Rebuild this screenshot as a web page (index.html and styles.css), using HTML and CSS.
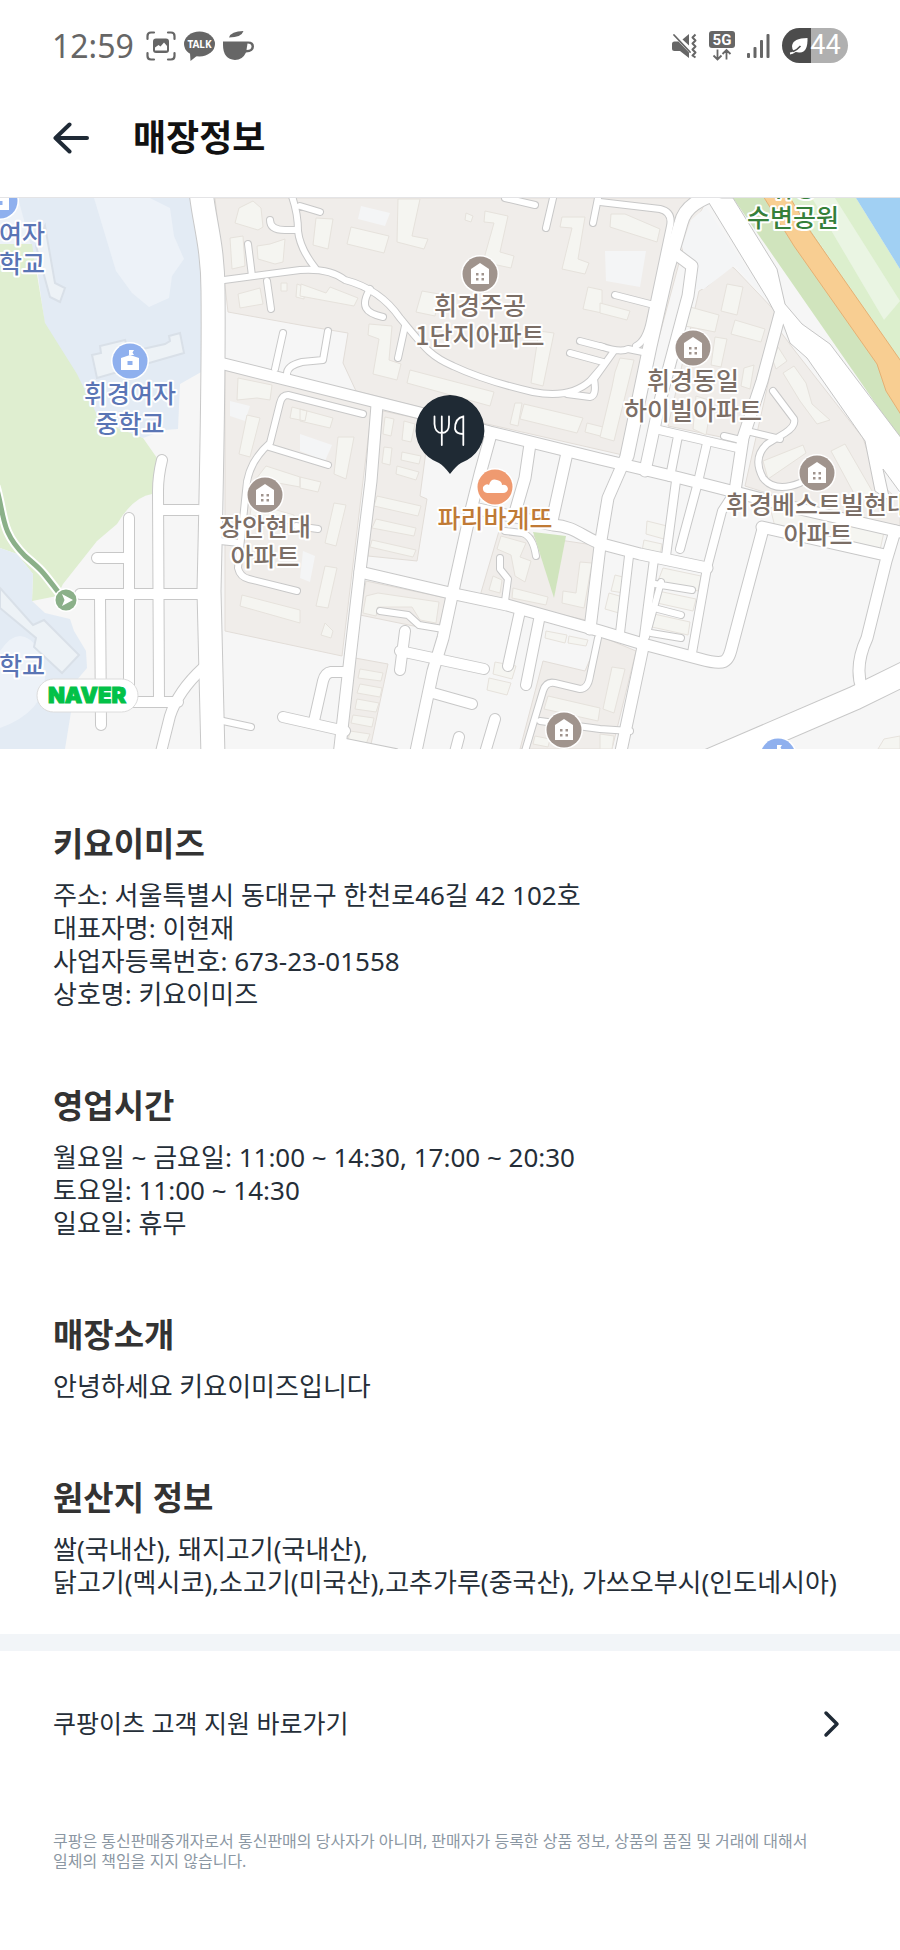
FILE: index.html
```
<!DOCTYPE html>
<html lang="ko">
<head>
  <meta charset="UTF-8">
  <meta name="viewport" content="width=device-width, initial-scale=1.0">
  <title>매장정보</title>
  <link rel="stylesheet" href="styles.css">
</head>
<body>
  <div class="status">
    <div class="status-left">
      <span class="time">12:59</span>
      <svg width="30" height="30" viewBox="0 0 30 30" aria-hidden="true">
        <path d="M1.5 8V5Q1.5 1.500 5 1.500H8M22 1.500H25Q28.500 1.500 28.500 5V8M28.500 22V25Q28.500 28.500 25 28.500H22M8 28.500H5Q1.500 28.500 1.500 25V22" fill="none" stroke="#666" stroke-width="2.200" stroke-linecap="round"/>
        <rect x="7" y="7.500" width="16" height="14.500" rx="3" fill="#666"/>
        <path d="M9 19.500V16.500L12.500 14L14.500 15.500L18 11.500L21 15V19.500Z" fill="#fff"/>
      </svg>
      <svg width="31" height="30" viewBox="0 0 31 30" aria-hidden="true">
        <ellipse cx="15.500" cy="13" rx="15.500" ry="12.500" fill="#666"/>
        <path d="M6 22L6.500 30L14 24Z" fill="#666"/>
        <text x="15.500" y="17" class="talk">TALK</text>
      </svg>
      <svg width="31" height="30" viewBox="0 0 31 30" aria-hidden="true">
        <path d="M0 10.500H24Q31 10 31 15.500Q31 21 23 21.500Q19.500 29 12 29Q0 28 0 14Z" fill="#666"/>
        <path d="M24.500 12.500Q28.500 12.500 28.500 15.500Q28.500 19 23.500 19Z" fill="#fff"/>
        <path d="M6 6.500Q8 0 20.500 0Q18.500 6.500 6 6.500Z" fill="#666"/>
      </svg>
    </div>
    <div class="status-right">
      <svg width="25" height="26" viewBox="0 0 25 26" fill="#666" aria-hidden="true">
        <path d="M0 11Q0 8.500 2.500 8.500H6.500L17 19.500V25L8 18H2.500Q0 18 0 15.500Z"/>
        <path d="M10.500 6.500L17 1V12.500Z"/>
        <path d="M2 2L18 19" stroke="#666" stroke-width="1.800" stroke-linecap="round"/>
        <path d="M23.500 1.500L20.500 4.500L23.500 7.500L20.500 10.500L23.500 13.500L20.500 16.500L23.500 19.500L20.500 22.500L23.500 24.500" fill="none" stroke="#666" stroke-width="2" stroke-linejoin="round"/>
      </svg>
      <svg width="26" height="30" viewBox="0 0 26 30" aria-hidden="true">
        <rect width="26" height="17" rx="3" fill="#666"/>
        <text x="13" y="14" class="five-g">5G</text>
        <path d="M8.500 18.500V28M4.500 24.500L8.500 28.500L12.500 24.500M17.500 28.500V19.500M13.500 23L17.500 19L21.500 23" fill="none" stroke="#666" stroke-width="1.800"/>
      </svg>
      <svg width="23" height="26" viewBox="0 0 23 26" fill="#666" aria-hidden="true">
        <rect x="0" y="20" width="3" height="5" rx="1"/>
        <rect x="6.500" y="14" width="3" height="11" rx="1"/>
        <rect x="13" y="7" width="3" height="18" rx="1"/>
        <rect x="19.500" y="1" width="3" height="24" rx="1"/>
      </svg>
      <div class="battery">
        <svg width="20" height="18" viewBox="0 0 20 18" aria-hidden="true">
          <path d="M18.500 1Q19 15 11 15.500Q3 16 3 9Q4 1 18.500 1Z" fill="#fff"/>
          <path d="M1 16.500Q6 16 11 9" fill="none" stroke="#fff" stroke-width="2"/>
          <path d="M4 14.500Q8 13 11.500 9" fill="none" stroke="#4c4c4c" stroke-width="1.500"/>
        </svg>
        <span>44</span>
      </div>
    </div>
  </div>

  <header class="header">
    <button class="back" type="button" aria-label="뒤로">
      <svg width="36" height="32" viewBox="0 0 36 32" aria-hidden="true">
        <path d="M34 16H3M16.500 2.500L2.500 16L16.500 29.500" fill="none" stroke="#1f2a36" stroke-width="4" stroke-linecap="round" stroke-linejoin="round"/>
      </svg>
    </button>
    <h1>매장정보</h1>
  </header>

  <svg class="map" viewBox="0 197 900 551" role="img" aria-label="매장 위치 지도">
    <defs>
      <g id="roads">
        <path class="w24" d="M201 190C204 220 213 245 213 290C214 380 211 500 209 590L213 755"/>
        <path class="w24" d="M690 768L855 697L910 670"/>
        <path class="w12" d="M220 362L300 382L420 412L490 431L600 458L680 477L735 491L800 508L905 532"/>
        <path class="w12" d="M377 404L371 480L360 570L350 657L339 755"/>
        <path class="w12" d="M360 571L450 592L507 604L600 630L643 643L700 658C725 665 728 662 732 645L743 603L763 528"/>
        <path class="w12" d="M491 433L480 473L470 513L453 590L443 637L433 670L415 755"/>
        <path class="w12" d="M530 443L525 477L514 515M567 452L563 470L552 520"/>
        <path class="w12" d="M478 508L553 524C575 525 585 538 602 543L640 553L707 567"/>
        <path class="w14" d="M722 190C700 198 685 205 681 222L667 270L650 345L627 455"/>
        <path class="w12" d="M625 458L608 497L600 545L590 628"/>
        <path class="w12" d="M676 253L692 265L688 295L660 400L645 470"/>
        <path class="w9" d="M676 480L666 555M697 485L680 548M629 555L620 632M654 558L643 643M735 490L722 510L707 567L692 652"/>
        <path class="w12" d="M780 313L762 380L743 437L735 490"/>
        <path class="w9" d="M655 428L742 448M678 435L670 476M707 442L698 481"/>
        <path class="w12" d="M762 526L885 554M895 530L886 560L867 637Q854 665 862 688M643 646L620 755"/>
        <path class="w11" d="M162 459Q158 475 158 490L159 700M160 509H198M129 517V700M97 557H127M80 593H202M100 595L101 724M133 701H178M203 667Q178 690 170 715L160 755"/>
        <path class="w11" d="M400 650L484 668M405 630L400 669M433 692L472 703M520 610L508 665M540 614L526 684M495 718L484 755M459 736L454 755M347 671H331Q325 672 323 680L314 720M283 716L345 730M345 743L395 753"/>
        <path class="w7" d="M224 279L300 269Q330 267 345 279Q380 288 400 317C425 347 430 355 453 365Q485 380 533 391Q570 398 590 380L602 366M567 393L590 396Q597 395 594 378L614 350M600 345Q620 352 628 348L648 352M650 303L615 294M636 345Q646 340 650 320L670 225Q673 211 660 208L600 201"/>
        <path class="w7" d="M290 190Q298 210 298 230Q300 248 316 268M270 219Q270 229 285 229H298M248 243L252 275M267 280L271 308M283 332L275 368M328 330L323 359L302 361Q286 365 287 374M405 325L398 357M370 288C360 305 365 312 383 316M505 197L535 204M553 197L546 227M598 197L593 222M580 340L603 346M570 352L603 361M300 205L320 211"/>
        <path class="w7" d="M363 413L288 394Q282 394 280 402L270 442Q247 462 246 490L238 567Q240 576 249 578L297 590M269 446L328 464M223 720L251 726M220 540L240 542M296 525L318 528"/>
        <path class="w7" d="M773 390L794 418Q796 425 785 432L767 443Q752 457 763 477Q775 492 800 482M747 430L780 438M724 435L745 440"/>
        <path class="w7" d="M380 610L408 614L419 624L443 628M500 557V568L508 578L505 600M505 530L522 532Q533 535 536 555M525 750L543 690Q546 680 555 682L580 688Q588 688 590 675L598 637M540 720L600 728L630 730M655 583L692 589M661 581L646 636M654 607L681 614M651 632L681 637"/>
      </g>
      <g id="home">
        <circle r="19" fill="#fff"/>
        <circle r="17.500" fill="#a0948d"/>
        <path d="M0 -11L9 -5V10H-9V-5Z" fill="#fff"/>
        <path d="M-4 -1H-1.500V1.500H-4ZM1.500 -1H4V1.500H1.500ZM-4 4H-1.500V6.500H-4ZM1.500 4H4V6.500H1.500Z" fill="#a0948d"/>
      </g>
      <g id="school">
        <circle r="19" fill="#fff"/>
        <circle r="17.500" fill="#8fb0ee"/>
        <path d="M-9 -3L0 -6L9 -3V9H-9ZM-1 -11H4L2.500 -8.500L4 -6H-1Z" fill="#fff"/>
        <rect x="-2.500" y="0" width="5" height="4" fill="#8fb0ee"/>
      </g>
    </defs>

    <rect y="197" width="900" height="551" fill="#f6f6f6"/>

    <!-- schools and parks -->
    <path fill="#edf2f8" d="M0 197H30V260H0Z"/>
    <path fill="#e3ebf4" d="M18 197H190L203 280V370L180 383L178 428L165 429L143 437L100 420L45 325L37 267Z"/>
    <path fill="#dfeed0" d="M0 243H32L45 322L77 373L100 420L143 437L157 457L152 493Q133 496 117 523L97 540L63 583L57 595L32 600L33 573L17 553L0 547Z"/>
    <path fill="#e3ebf4" d="M0 547L17 553L33 573L32 600L45 612L70 618L74 630L86 650L87 667L76 680L65 748H0Z"/>
    <path fill="#edf2f8" d="M94 197H150L170 207L174 235L184 258L172 275L169 297L149 306L132 292L116 270ZM0 650Q20 620 40 650Q60 705 0 727Z"/>
    <g class="school-bldg">
      <path d="M45 225L55 282L65 287L60 301L50 296L36 245Z"/>
      <path d="M92 354L101 352L100 345L125 339L129 351L165 343L170 340L169 335L180 332L184 352L97 377Z"/>
      <path d="M0 587L33 624L44 619L79 654L62 672L34 646L36 637L0 607Z"/>
    </g>
    <path fill="#d0e4bd" d="M733 197H790L900 365V438L860 380Z"/>
    <path fill="#dcefcd" d="M790 197H856L900 268V365Z"/>
    <path fill="#eaf5e3" d="M812 197H835L900 300L884 319Z"/>
    <path fill="#a1d0f3" d="M856 197H900V268Z"/>
    <path fill="#f8ce92" stroke="#e5b074" d="M760 190L794 245L877 363L886 390L905 420V366L810 230L786 190Z"/>

    <!-- apartment complexes -->
    <g class="block">
      <path d="M215 197H708L685 240L627 455L487 423L356 390L343 362L348 332L300 324L228 311Z"/>
      <path d="M225 369L372 405L342 655L225 630Z"/>
      <path d="M383 410L430 420L420 495L427 498L417 560L368 555Z"/>
      <path d="M499 530L600 545L590 620L480 595Z"/>
      <path d="M366 580L446 597L438 630L360 614Z"/>
      <path d="M355 657L388 663L370 748H345Z"/>
      <path d="M543 660L585 670L600 635L636 650L612 748H520Z"/>
      <path d="M699 290L708 285L730 264L735 268L775 310L740 440L668 425Z"/>
      <path d="M780 330L795 350L863 437L877 480L900 500V535L745 485Z"/>
    </g>
    <path fill="#f4f5f6" d="M682 245L691 219L706 206L768 300L735 264L704 288L694 288ZM361 205L390 212L385 225L358 218ZM605 250L646 250L640 286L606 280ZM300 433L332 444L325 460L300 450ZM303 550L315 555L310 581L300 577ZM230 400L250 405L245 420L230 415Z"/>
    <g class="bldg">
      <path d="M239 207L253 200L261 207L263 226L258 229L235 222ZM257 245L270 243L285 238L283 261L275 263L258 258ZM230 237L243 235L245 265L232 268ZM238 293L260 287L263 303L240 307ZM281 282L287 282V290H281ZM297 283L305 286L304 298L296 296Z"/>
      <path d="M316 217L333 218L328 248L313 244ZM351 226L389 235L384 252L347 243ZM398 198H420L412 235L428 238L424 248L397 241ZM485 210L508 215L500 251L514 255L511 267L483 261L494 222L484 221ZM562 216L585 216L578 258L589 262L585 273L562 268L572 227L560 226ZM466 212L473 215L471 221L465 219Z"/>
      <path d="M301 283L326 292L330 286L358 297L354 305L300 295ZM422 290L439 293L435 315L416 311ZM369 323L392 325L389 359L401 363L397 379L373 373L379 338L368 334ZM410 369L494 391L490 405L407 382ZM539 330L554 332L543 385L531 382ZM588 286L602 289V312L583 308ZM515 402L522 402L518 425L510 423ZM524 403L583 417L577 432L520 418ZM587 422L607 427L604 436L585 431Z"/>
      <path d="M611 213L625 213L660 228L657 241L610 226ZM600 302L630 310L627 319L600 312ZM620 357L634 359L614 440L600 436L612 386L615 371Z"/>
      <path d="M238 377L272 384L270 399L257 397L237 399ZM247 414L260 417L250 456L239 453ZM292 406L307 410L305 420L290 417ZM300 408L333 417L330 427L300 420ZM338 436L354 436L346 478L334 473ZM300 476L321 481L318 491L300 487ZM334 502L346 504L336 545L325 542ZM325 565L337 567L328 607L316 605ZM242 594L300 609V622L240 605ZM325 622L333 630L331 637L321 634ZM266 465L300 476V486L256 478ZM252 502L294 514V524L250 514Z"/>
      <path d="M385 416L394 418L391 435L383 433ZM404 420L415 423L411 441L402 439ZM384 446L392 447L390 464L382 462ZM402 451L421 455L419 463L401 459ZM397 465L419 471L416 479L396 473ZM377 495L421 505L418 515L374 505ZM376 518L416 527L414 535L372 527ZM372 539L416 549L413 556L370 546Z"/>
      <path d="M378 592L439 601L436 622L420 619L412 606L378 606L376 615L363 612L366 595ZM360 668L383 672L381 680L358 677ZM360 683L382 687L380 696L357 692ZM357 698L379 702L376 711L355 708ZM353 714L374 717L372 726L351 722ZM350 730L370 733L366 743L348 740Z"/>
      <path d="M501 535L526 542L520 556L531 560L525 581L515 575L511 554L497 548ZM580 561L592 562L584 607L562 602L563 590L576 592ZM513 587L548 596L546 604L512 597ZM493 575L502 579L500 592L489 589ZM495 661L516 665L512 678L493 673ZM489 677L511 682L507 694L487 689ZM546 630L567 634L565 642L545 637ZM569 635L588 639L586 645L568 642ZM548 695L600 707L598 720L544 708ZM612 666L625 668L614 712L603 708ZM535 735L550 738L548 746L533 743ZM600 733L614 735L612 748H600Z"/>
      <path d="M727 283L743 286L737 314L721 310ZM690 306L719 314L715 331L685 325ZM735 319L765 328L761 341L731 333ZM744 367L754 364L750 388L741 385ZM715 336L727 338L721 366L711 364ZM696 395L712 400L706 434L693 428Z"/>
      <path d="M783 372L794 365L806 382L812 403L830 419L817 423L800 400ZM778 346L787 360L776 368L773 360ZM763 460L803 444L806 452L768 478ZM831 450L845 443L875 495L858 500ZM770 506L884 531L880 549L775 526Z"/>
      <path d="M647 520L667 525L664 538L646 533ZM644 539L662 543L660 555L642 550ZM615 574L627 577L624 592L611 590ZM609 592L623 596L619 612L605 608ZM663 567L701 575L698 590L658 580ZM658 590L696 598L693 610L657 602ZM654 613L690 621L688 634L652 626Z"/>
      <path d="M878 748L884 738L900 735V748Z"/>
    </g>
    <path fill="#e9dfda" d="M884 468L900 456V490Z"/>

    <use href="#roads" class="road-edge"/>
    <path d="M706 197H733L777 268L785 303L802 323L830 343L905 442V498L883 468L890 500L875 490L865 440L807 357L790 342L783 323L775 312L767 297Z" fill="#fff" stroke="#c6c6c6"/>
    <use href="#roads" class="road"/>
    <path fill="#d0e4bd" d="M533 531L566 535L554 597Z"/>

    <!-- walking path -->
    <path d="M-4 485C5 515 0 530 25 555C45 572 42 570 62 596" class="trail-edge"/>
    <path d="M-4 485C5 515 0 530 25 555C45 572 42 570 62 596" class="trail"/>
    <circle cx="66" cy="599" r="12" fill="#fff"/>
    <circle cx="66" cy="599" r="10.500" fill="#8bb089"/>
    <path d="M62 593L73 599L62 605L64.500 599Z" fill="#fff"/>

    <use href="#school" x="0" y="200"/>
    <use href="#school" x="130" y="360"/>
    <use href="#school" x="778" y="755"/>
    <use href="#home" x="480" y="273"/>
    <use href="#home" x="693" y="347"/>
    <use href="#home" x="817" y="472"/>
    <use href="#home" x="265" y="494"/>
    <use href="#home" x="564" y="729"/>
    <circle cx="495" cy="486" r="19" fill="#fff"/>
    <circle cx="495" cy="486" r="17.500" fill="#ef9a70"/>
    <path d="M487 492Q482 491 483 486Q486 482 489 484Q491 477 497 479Q502 480 502 484Q507 483 508 488Q507 492 503 492Z" fill="#fff"/>

    <g class="label label-school">
      <text x="22" y="242">여자</text>
      <text x="22" y="272">학교</text>
      <text x="130" y="402">휘경여자</text>
      <text x="130" y="432">중학교</text>
      <text x="22" y="674">학교</text>
    </g>
    <g class="label label-apt">
      <text x="480" y="314">휘경주공</text>
      <text x="480" y="344">1단지아파트</text>
      <text x="693" y="389">휘경동일</text>
      <text x="693" y="419">하이빌아파트</text>
      <text x="818" y="513">휘경베스트빌현대</text>
      <text x="818" y="543">아파트</text>
      <text x="265" y="535">장안현대</text>
      <text x="265" y="565">아파트</text>
    </g>
    <g class="label label-park">
      <text x="793" y="196">휘경</text>
      <text x="793" y="226">수변공원</text>
    </g>
    <text class="label label-shop" x="495" y="527">파리바게뜨</text>

    <!-- store pin -->
    <path d="M450 394A35 35 0 0 1 461 462Q456 465 450 473Q444 465 439 462A35 35 0 0 1 450 394Z" fill="#1f2a34"/>
    <path d="M434.500 415.500V423Q435 432 441.800 432Q449 432 449 423V415.500M441.800 415.500V444M463.300 444V415.500Q455 417 455 428Q456 433 463 433" fill="none" stroke="#fff" stroke-width="1.800" stroke-linecap="round"/>

    <rect class="naver-pill" x="37" y="678" width="101" height="33" rx="16.500"/>
    <text class="naver" x="87" y="702">NAVER</text>
  </svg>

  <main class="content">
    <section>
      <h2>키요이미즈</h2>
      <p>주소: 서울특별시 동대문구 한천로46길 42 102호</p>
      <p>대표자명: 이현재</p>
      <p>사업자등록번호: 673-23-01558</p>
      <p>상호명: 키요이미즈</p>
    </section>
    <section>
      <h2>영업시간</h2>
      <p>월요일 ~ 금요일: 11:00 ~ 14:30, 17:00 ~ 20:30</p>
      <p>토요일: 11:00 ~ 14:30</p>
      <p>일요일: 휴무</p>
    </section>
    <section>
      <h2>매장소개</h2>
      <p>안녕하세요 키요이미즈입니다</p>
    </section>
    <section>
      <h2>원산지 정보</h2>
      <p>쌀(국내산), 돼지고기(국내산),</p>
      <p>닭고기(멕시코),소고기(미국산),고추가루(중국산), 가쓰오부시(인도네시아)</p>
    </section>
  </main>

  <a class="support" href="#">
    <span>쿠팡이츠 고객 지원 바로가기</span>
    <svg width="17" height="28" viewBox="0 0 17 28" aria-hidden="true">
      <path d="M3 3L14 14L3 25" fill="none" stroke="#1f2a36" stroke-width="3.500" stroke-linecap="round" stroke-linejoin="round"/>
    </svg>
  </a>

  <footer class="footer">
    쿠팡은 통신판매중개자로서 통신판매의 당사자가 아니며, 판매자가 등록한 상품 정보, 상품의 품질 및 거래에 대해서 일체의 책임을 지지 않습니다.
  </footer>
</body>
</html>
```
FILE: styles.css
```
* {
  margin: 0;
  padding: 0;
  box-sizing: border-box;
}
body {
  background: #fff;
  color: #252e38;
  font-family: "Noto Sans", "Noto Sans CJK KR", sans-serif;
  word-break: keep-all;
}

/* status bar */
.status {
  display: flex;
  justify-content: space-between;
  align-items: center;
  height: 91px;
  padding: 0 52px;
}
.status-left {
  display: flex;
  align-items: center;
  gap: 8px;
}
.status-right {
  display: flex;
  align-items: center;
  gap: 12px;
}
.time {
  margin-right: 4px;
  color: #666;
  font: 400 32px/40px "Noto Sans", sans-serif;
}
.talk {
  fill: #fff;
  font: 700 10px "Noto Sans", sans-serif;
  text-anchor: middle;
}
.five-g {
  fill: #fff;
  font: 700 15px Roboto, sans-serif;
  text-anchor: middle;
}
.battery {
  display: flex;
  align-items: center;
  justify-content: center;
  gap: 1px;
  width: 66px;
  height: 35px;
  border-radius: 18px;
  background: linear-gradient(to right, #4c4c4c 44%, #b0b0b0 44%);
  color: #fff;
  font: 400 27px/35px Roboto, sans-serif;
}

/* header */
.header {
  display: flex;
  align-items: center;
  gap: 44px;
  height: 106px;
  padding: 0 53px 12px;
}
.header h1 {
  color: #111;
  font-size: 36px;
  line-height: 48px;
  font-weight: 600;
}
.back {
  display: flex;
  border: 0;
  background: none;
  cursor: pointer;
}

/* map */
.map {
  display: block;
  width: 100%;
  height: auto;
  border-top: 1px solid #e4e4e6;
}
.block {
  fill: #f0edea;
  stroke: #e2ddd8;
}
.bldg {
  fill: #f5f5f1;
  stroke: #e6e2dc;
}
.school-bldg {
  fill: #edf2f6;
  stroke: #d9e0e8;
  stroke-width: 2px;
}
.road-edge,
.road {
  fill: none;
  stroke-linecap: round;
  stroke-linejoin: round;
}
.road-edge {
  --edge: 1px;
  stroke: #c8c8c8;
}
.road {
  --edge: -1px;
  stroke: #fff;
}
.w24 { stroke-width: calc(24px + var(--edge)); }
.w14 { stroke-width: calc(14px + var(--edge)); }
.w12 { stroke-width: calc(12px + var(--edge)); }
.w11 { stroke-width: calc(11px + var(--edge)); }
.w9 { stroke-width: calc(9px + var(--edge)); }
.w7 { stroke-width: calc(7px + var(--edge)); }
.trail-edge {
  fill: none;
  stroke: #fff;
  stroke-width: 9px;
}
.trail {
  fill: none;
  stroke: #8bb089;
  stroke-width: 5px;
}
.label {
  font: 500 25px "Noto Sans CJK KR", sans-serif;
  text-anchor: middle;
  stroke: #fff;
  stroke-width: 4px;
  stroke-linejoin: round;
  paint-order: stroke;
}
.label-school { fill: #5a75b5; }
.label-apt { fill: #7b6e66; }
.label-park { fill: #35803a; }
.label-shop { fill: #c07a35; }
.naver-pill {
  fill: #fff;
  stroke: #dcdcdc;
}
.naver {
  fill: #03c148;
  stroke: #03c148;
  stroke-width: 1px;
  font: 900 22px Inter, sans-serif;
  text-anchor: middle;
}

/* store information */
.content {
  padding: 0 53px 35px;
  border-bottom: 17px solid #f2f5f8;
}
.content section {
  padding-top: 75px;
}
.content h2 {
  margin-bottom: 15px;
  color: #333;
  font-size: 33px;
  line-height: 40px;
  font-weight: 600;
}
.content p {
  font-size: 26px;
  line-height: 33px;
}
.support {
  display: flex;
  align-items: center;
  justify-content: space-between;
  padding: 56px 60px 56px 53px;
  color: #252e38;
  font-size: 25px;
  line-height: 33px;
  text-decoration: none;
}
.footer {
  padding: 35px 53px 64px;
  color: #8b97a3;
  font-size: 16px;
  line-height: 20px;
}
```
